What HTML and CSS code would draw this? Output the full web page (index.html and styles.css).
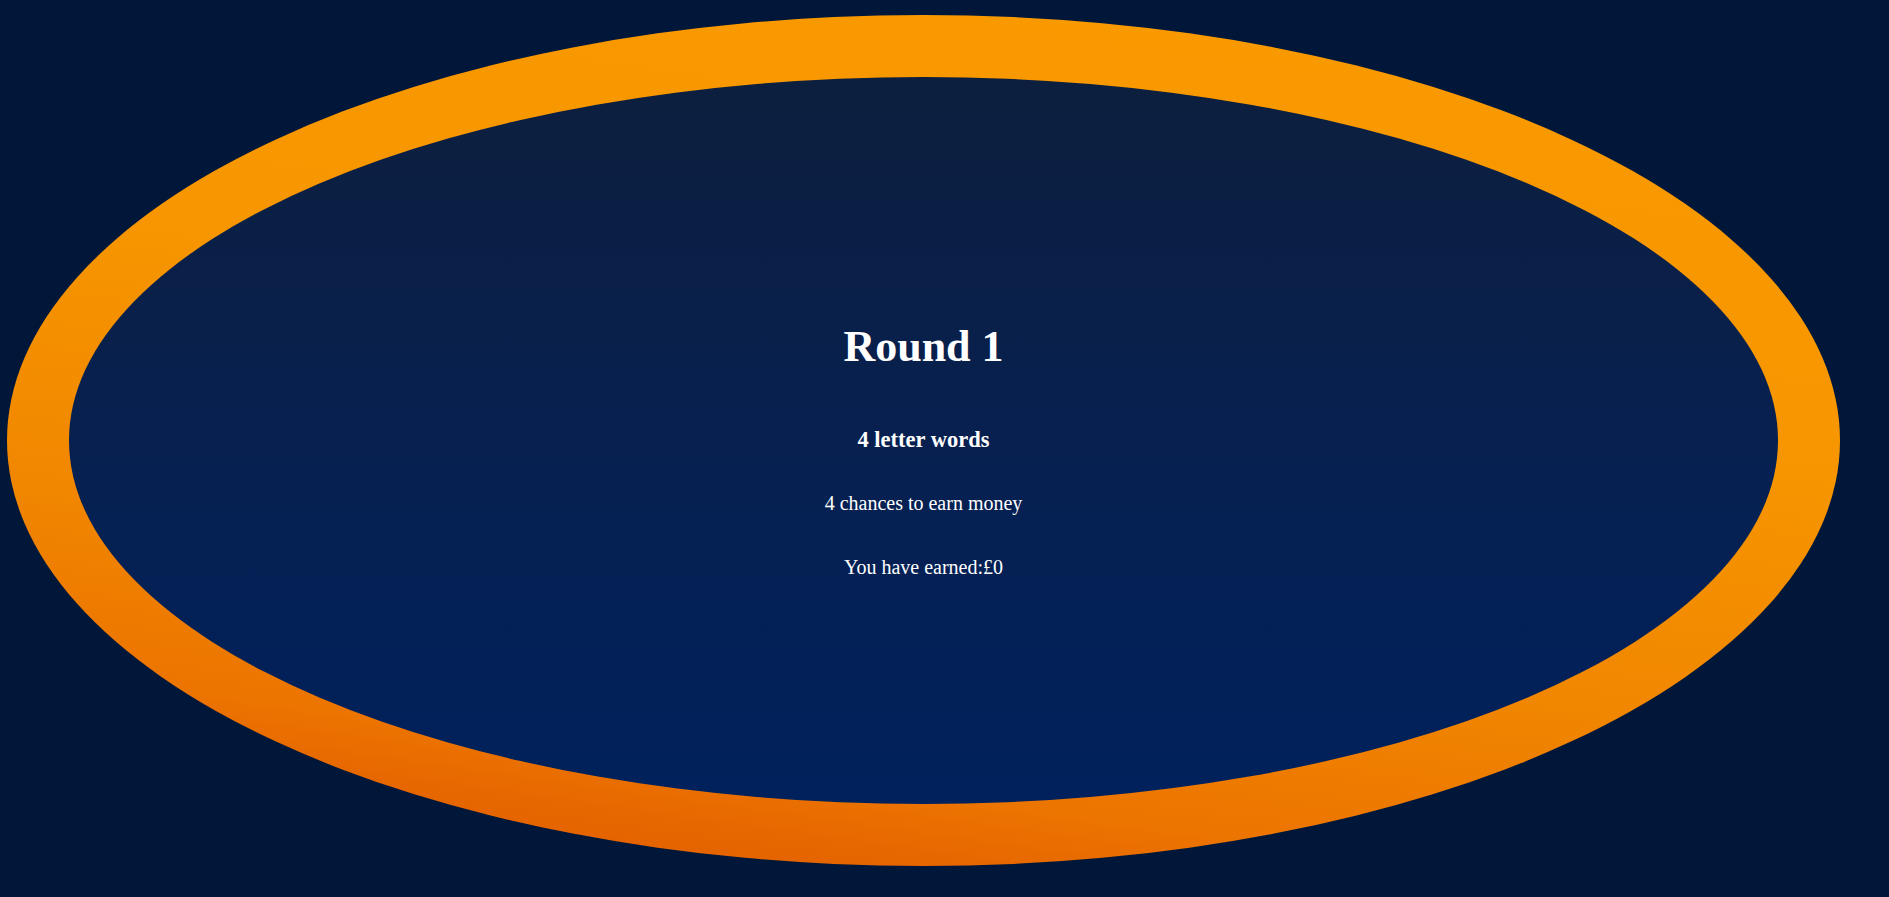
FILE: index.html
```html
<!DOCTYPE html>
<html lang="en">
<head>
<meta charset="utf-8">
<title>Round 1</title>
<link rel="stylesheet" href="styles.css">
</head>
<body>
  <main class="ring">
    <h1 class="round-title">Round 1</h1>
    <h3 class="round-sub">4 letter words</h3>
    <p class="round-info">4 chances to earn money</p>
    <p class="round-earned">You have earned:£0</p>
  </main>
</body>
</html>
```
FILE: styles.css
```css
html, body {
  margin: 0;
  padding: 0;
  height: 100%;
}
body {
  background: #01173a;
  font-family: "Liberation Serif", "Times New Roman", serif;
  color: #ffffff;
  overflow: hidden;
  padding: 15px 0 0 7px;
  box-sizing: border-box;
}
.ring {
  box-sizing: border-box;
  width: 1833px;
  height: 851px;
  border-radius: 50%;
  border: 62px solid transparent;
  background:
    linear-gradient(to bottom, #0d1f3e 0%, #072050 50%, #00215c 100%) padding-box,
    linear-gradient(8deg, #df5a00 0%, #e66600 12%, #ec7400 18%, #f18700 35%, #f79600 60%, #fa9a00 100%) border-box;
  display: flex;
  flex-direction: column;
  align-items: center;
  padding-top: 246px;
  text-align: center;
}
.round-title {
  margin: 0;
  font-size: 44px;
  line-height: 48px;
  font-weight: bold;
}
.round-sub {
  margin: 56px 0 0;
  font-size: 22.5px;
  line-height: 26px;
  font-weight: bold;
}
.round-info {
  margin: 39px 0 0;
  font-size: 20px;
  line-height: 23px;
}
.round-earned {
  margin: 41px 0 0;
  font-size: 20px;
  line-height: 23px;
}
```
